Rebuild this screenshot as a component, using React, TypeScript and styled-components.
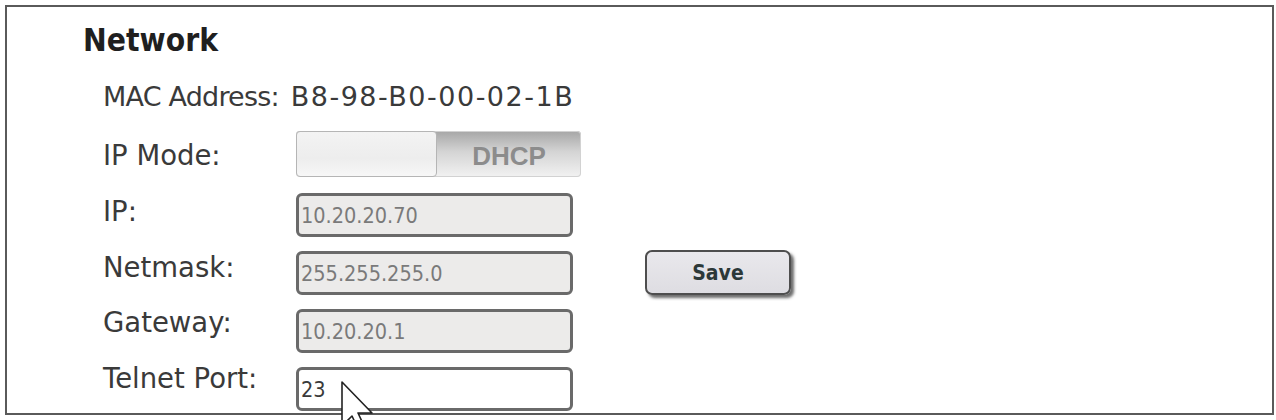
import React from "react";
import styled, { createGlobalStyle } from "styled-components";

const GlobalStyle = createGlobalStyle`
  html, body {
    margin: 0;
    padding: 0;
    background: #ffffff;
  }
  body {
    font-family: "DejaVu Sans", Tahoma, Verdana, sans-serif;
    color: #3a3a3a;
  }
`;

const Page = styled.div`
  width: 1276px;
  height: 420px;
  padding: 5px 2px 0 5px;
  box-sizing: border-box;
  overflow: hidden;
`;

const Panel = styled.section`
  position: relative;
  height: 410px;
  box-sizing: border-box;
  border: 2px solid #5a5a5a;
  padding: 15px 0 0 76px;
`;

const Heading = styled.h2`
  margin: 0;
  font-family: "DejaVu Sans Condensed", "DejaVu Sans", Tahoma, sans-serif;
  font-size: 31.5px;
  line-height: 36px;
  font-weight: bold;
  color: #1f1f1f;
`;

const MacRow = styled.div`
  display: flex;
  gap: 12px;
  margin: 22px 0 0 20px;
  font-size: 27px;
  line-height: 34px;
`;

const MacLabel = styled.span`
  letter-spacing: -0.8px;
`;

const MacValue = styled.span`
  letter-spacing: 1.5px;
`;

const Form = styled.div`
  display: flex;
  margin: 17px 0 0 20px;
`;

const LabelColumn = styled.div`
  display: flex;
  flex-direction: column;
  gap: 21.8px;
  width: 193px;
  padding-top: 7px;
`;

const Label = styled.div`
  font-size: 27.5px;
  line-height: 34px;
  color: #3a3a3a;
  white-space: nowrap;
`;

const FieldColumn = styled.div`
  display: flex;
  flex-direction: column;
  gap: 14px;
  width: 286px;
`;

const Toggle = styled.div`
  display: flex;
  width: 285px;
  height: 46px;
  margin-bottom: 2px;
  border-radius: 4px;
  overflow: hidden;
  background: linear-gradient(#a6a6a6, #d4d4d4 45%, #f2f2f2);
  box-shadow: inset 0 0 0 1px #d2d2d2;
`;

const ToggleKnob = styled.div`
  width: 141px;
  box-sizing: border-box;
  border: 1px solid #b5b5b5;
  border-radius: 4px;
  background: linear-gradient(#f3f3f3, #ededed 60%, #f7f7f7);
`;

const ToggleText = styled.div`
  flex: 1;
  display: flex;
  align-items: center;
  justify-content: center;
  padding: 4px 0 0 0;
  font-family: "Liberation Sans", Arial, sans-serif;
  font-weight: bold;
  font-size: 26px;
  color: #8c8c8c;
`;

const TextInput = styled.input<{ $disabled?: boolean }>`
  width: 277px;
  height: 44px;
  box-sizing: border-box;
  border: 3px solid #6a6a6a;
  border-radius: 6px;
  padding: 0 0 0 2px;
  font-family: "DejaVu Sans Condensed", "DejaVu Sans", sans-serif;
  font-size: 21.5px;
  color: ${(p) => (p.$disabled ? "#7a7a7a" : "#3a3a3a")};
  background: ${(p) => (p.$disabled ? "#ecebea" : "#ffffff")};
  outline: none;
`;

const ActionColumn = styled.div`
  display: flex;
  flex-direction: column;
  padding: 119px 0 0 63px;
`;

const SaveButton = styled.button`
  width: 146px;
  height: 45px;
  box-sizing: border-box;
  border: 2px solid #4e4e4e;
  border-radius: 7px;
  background: linear-gradient(#e9e8ec, #dedde2);
  box-shadow: 3px 3px 3px rgba(60, 60, 60, 0.75);
  font-family: "DejaVu Sans Condensed", "DejaVu Sans", sans-serif;
  font-weight: bold;
  font-size: 21px;
  color: #2c3838;
  cursor: pointer;
`;

const Pointer = styled.svg`
  position: absolute;
  left: 333px;
  top: 373px;
  pointer-events: none;
`;

type Field = { label: string; value: string; locked: boolean };

const fields: Field[] = [
  { label: "IP:", value: "10.20.20.70", locked: true },
  { label: "Netmask:", value: "255.255.255.0", locked: true },
  { label: "Gateway:", value: "10.20.20.1", locked: true },
  { label: "Telnet Port:", value: "23", locked: false },
];

export default function App() {
  return (
    <>
      <GlobalStyle />
      <Page>
        <Panel>
          <Heading>Network</Heading>
          <MacRow>
            <MacLabel>MAC Address:</MacLabel>
            <MacValue>B8-98-B0-00-02-1B</MacValue>
          </MacRow>
          <Form>
            <LabelColumn>
              <Label>IP Mode:</Label>
              {fields.map((f) => (
                <Label key={f.label}>{f.label}</Label>
              ))}
            </LabelColumn>
            <FieldColumn>
              <Toggle>
                <ToggleKnob />
                <ToggleText>DHCP</ToggleText>
              </Toggle>
              {fields.map((f) => (
                <TextInput
                  key={f.label}
                  defaultValue={f.value}
                  readOnly={f.locked}
                  $disabled={f.locked}
                />
              ))}
            </FieldColumn>
            <ActionColumn>
              <SaveButton>Save</SaveButton>
            </ActionColumn>
          </Form>
          {/* mouse pointer resting over the telnet port field */}
          <Pointer width="40" height="60" viewBox="0 0 40 60">
            <path
              d="M2 2 L2 46 L12 36 L20 53 L26 50 L18 33 L32 33 Z"
              fill="#ffffff"
              stroke="#222222"
              strokeWidth="1.6"
              strokeLinejoin="round"
            />
          </Pointer>
        </Panel>
      </Page>
    </>
  );
}
